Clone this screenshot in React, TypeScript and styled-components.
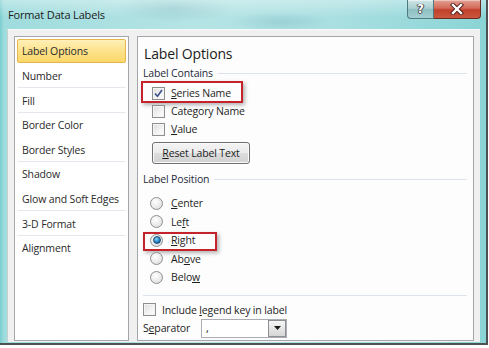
import React from "react";
import styled, { createGlobalStyle } from "styled-components";

const Global = createGlobalStyle`
  html, body { margin: 0; padding: 0; background: #ffffff; }
  body { font-family: "Open Sans", "Noto Sans", Arial, sans-serif; letter-spacing: -0.15px; }
  * { box-sizing: border-box; }
`;

const Window = styled.div`
  width: 488px;
  height: 345px;
  border-right: 2px solid #4d5152;
  border-bottom: 2px solid #4d5152;
  display: flex;
  flex-direction: column;
  background: linear-gradient(90deg, #79cdd0 0px, #9fdcdd 4px, #b6e4e5 40%, #a9dfe1 70%, #8ad4d6 100%);
`;

const TitleBar = styled.div`
  height: 29px;
  flex-shrink: 0;
  display: flex;
  align-items: flex-start;
  padding: 0 5px 0 8px;
  background: linear-gradient(180deg, rgba(255,255,255,0.35), rgba(255,255,255,0) 60%),
    radial-gradient(ellipse 60px 14px at 175px 8px, rgba(80,150,160,0.25), transparent),
    radial-gradient(ellipse 50px 10px at 280px 22px, rgba(80,150,160,0.2), transparent);
`;

const Title = styled.div`
  font-size: 11px;
  line-height: 29px;
  color: #1a1a1a;
  flex: 1;
`;

const Controls = styled.div`
  display: flex;
  height: 19px;
  flex-shrink: 0;
`;

const HelpButton = styled.div`
  width: 27px;
  height: 19px;
  border: 1px solid #4f7a80;
  border-top: none;
  border-radius: 0 0 0 4px;
  background: linear-gradient(180deg, #cfe6e7 0%, #aacfd1 45%, #8dbfc2 55%, #a3cfd1 100%);
  box-shadow: inset 0 1px 0 rgba(255, 255, 255, 0.5);
  display: flex;
  align-items: center;
  justify-content: center;
  color: #ffffff;
  font-family: "DejaVu Sans", sans-serif;
  font-weight: bold;
  font-size: 12px;
  text-shadow: 0 0 1px #303030, 1px 0 0 #505050, -1px 0 0 #505050, 0 1px 0 #505050;
`;

const CloseButton = styled.div`
  width: 47px;
  height: 19px;
  border: 1px solid #6b2a22;
  border-top: none;
  border-left: none;
  border-radius: 0 0 4px 0;
  background: linear-gradient(180deg, #e3a195 0%, #d46a58 45%, #c1402c 55%, #c9583f 100%);
  box-shadow: inset 0 1px 0 rgba(255, 255, 255, 0.4);
  display: flex;
  align-items: center;
  justify-content: center;
`;

const Client = styled.div`
  flex: 1;
  margin: 0 6px 1px 7px;
  background: #f0f0f0;
  border-top: 1px solid #f8fafa;
  border-left: 1px solid #c8d0d0;
  padding: 6px 6px 1px 6px;
  display: flex;
  gap: 8px;
`;

const List = styled.div`
  width: 115px;
  flex-shrink: 0;
  border: 1px solid #a3a6aa;
  background: #ffffff;
  padding: 2px 2px 0 2px;
  display: flex;
  flex-direction: column;
`;

const Item = styled.div<{ $selected?: boolean; $sep?: boolean }>`
  height: 24px;
  padding-left: 4px;
  display: flex;
  align-items: center;
  font-size: 10.5px;
  color: #2a2a2a;
  border-radius: 2px;
  border: 1px solid ${(p) => (p.$selected ? "#e5b74c" : "transparent")};
  background: ${(p) =>
    p.$selected ? "linear-gradient(180deg, #fff0b8 0%, #fde28b 50%, #fcd76a 100%)" : "transparent"};
  ${(p) => (p.$sep ? "border-bottom: 1px solid #e4e8ee; border-radius: 0; height: 25px;" : "")}
`;

const Panel = styled.div`
  flex: 1;
  border: 1px solid #a3a6aa;
  background: #fdfdfd;
  padding: 0 5px 0 5px;
  display: flex;
  flex-direction: column;
`;

const PanelTitle = styled.div`
  margin-top: 7px;
  padding-left: 1px;
  font-size: 14px;
  line-height: 20px;
  color: #1b1b1b;
`;

const SectionHeader = styled.div<{ $top: number }>`
  margin-top: ${(p) => p.$top}px;
  height: 14px;
  display: flex;
  align-items: center;
  gap: 5px;
  font-size: 10.5px;
  color: #1d2a3a;
  &::after {
    content: "";
    flex: 1;
    height: 1px;
    margin-right: 1px;
    background: #dde3ea;
  }
`;

const Rule = styled.div`
  margin-top: 8px;
  height: 1px;
  margin-right: 1px;
  background: #dde3ea;
`;

const Row = styled.div<{ $indent?: number; $h?: number; $top?: number; $gap?: number }>`
  position: relative;
  height: ${(p) => p.$h ?? 18}px;
  margin-top: ${(p) => p.$top ?? 0}px;
  padding-left: ${(p) => p.$indent ?? 0}px;
  display: flex;
  align-items: center;
  gap: ${(p) => p.$gap ?? 6}px;
  font-size: 10.5px;
  color: #1e1e1e;
`;

const Box = styled.span`
  width: 13px;
  height: 13px;
  border: 1px solid #8e8f8f;
  background: linear-gradient(135deg, #dcdcdc 0%, #f4f4f4 60%, #ffffff 100%);
  box-shadow: inset 0 0 0 1px #f4f4f4;
  display: flex;
  align-items: center;
  justify-content: center;
  flex-shrink: 0;
`;

const Radio = styled.span<{ $checked?: boolean }>`
  width: 13px;
  height: 13px;
  border-radius: 50%;
  border: 1px solid #8e8f8f;
  background: radial-gradient(circle at 40% 35%, #ffffff 0%, #e8e8e8 60%, #d4d4d4 100%);
  display: flex;
  align-items: center;
  justify-content: center;
  flex-shrink: 0;
  &::after {
    content: "";
    display: ${(p) => (p.$checked ? "block" : "none")};
    width: 6px;
    height: 6px;
    border-radius: 50%;
    background: radial-gradient(circle at 40% 35%, #8fd3f7 0%, #1f7fc0 60%, #0e4f86 100%);
    border: 0.5px solid #1a4f7a;
  }
`;

const U = styled.span`
  text-decoration: underline;
  text-underline-offset: 1px;
`;

const Highlight = styled.div<{ $l: number; $t: number; $w: number; $h: number }>`
  position: absolute;
  left: ${(p) => p.$l}px;
  top: ${(p) => p.$t}px;
  width: ${(p) => p.$w}px;
  height: ${(p) => p.$h}px;
  border: 2px solid #c4232b;
  box-shadow: 2px 2px 4px rgba(0, 0, 0, 0.3);
  pointer-events: none;
`;

const Button = styled.div`
  margin-top: 4px;
  margin-left: 9px;
  width: 98px;
  height: 22px;
  border: 1px solid #707070;
  border-radius: 3px;
  background: linear-gradient(180deg, #f4f4f4 0%, #ebebeb 48%, #dcdcdc 52%, #d2d2d2 100%);
  box-shadow: inset 0 0 0 1px #fafafa;
  display: flex;
  align-items: center;
  justify-content: center;
  font-size: 10.5px;
  color: #1e1e1e;
`;

const SepLabel = styled.span`
  width: 58px;
  flex-shrink: 0;
`;

const Combo = styled.div`
  width: 86px;
  height: 19px;
  border: 1px solid #abadb3;
  background: #ffffff;
  display: flex;
  align-items: stretch;
`;

const ComboText = styled.div`
  flex: 1;
  padding-left: 4px;
  font-size: 11px;
  line-height: 15px;
`;

const ComboButton = styled.div`
  width: 18px;
  border: 1px solid #8c8f94;
  background: linear-gradient(180deg, #f6f6f6 0%, #e6e6e6 50%, #d6d6d6 100%);
  display: flex;
  align-items: center;
  justify-content: center;
`;

const Check = () => (
  <svg width="9" height="9" viewBox="0 0 9 9">
    <path d="M1 4.5 L3.5 7.2 L8 1" fill="none" stroke="#3c4f8a" strokeWidth="1.6" />
  </svg>
);

const Arrow = () => (
  <svg width="7" height="4" viewBox="0 0 7 4">
    <path d="M0 0 H7 L3.5 4 Z" fill="#1a1a1a" />
  </svg>
);

const CloseX = () => (
  <svg width="14" height="12" viewBox="0 0 14 12">
    <path d="M3 2 L11 10 M11 2 L3 10" stroke="#4a1a14" strokeWidth="4.2" strokeLinecap="square" />
    <path d="M3 2 L11 10 M11 2 L3 10" stroke="#ffffff" strokeWidth="2.4" strokeLinecap="square" />
  </svg>
);

const categories: { label: string; selected?: boolean; sep?: boolean }[] = [
  { label: "Label Options", selected: true },
  { label: "Number", sep: true },
  { label: "Fill", sep: true },
  { label: "Border Color" },
  { label: "Border Styles", sep: true },
  { label: "Shadow" },
  { label: "Glow and Soft Edges", sep: true },
  { label: "3-D Format", sep: true },
  { label: "Alignment" },
];

export default function App() {
  return (
    <>
      <Global />
      <Window>
        <TitleBar>
          <Title>Format Data Labels</Title>
          <Controls>
            <HelpButton>?</HelpButton>
            <CloseButton>
              <CloseX />
            </CloseButton>
          </Controls>
        </TitleBar>
        <Client>
          <List>
            {categories.map((c) => (
              <Item key={c.label} $selected={c.selected} $sep={c.sep}>
                {c.label}
              </Item>
            ))}
          </List>
          <Panel>
            <PanelTitle>Label Options</PanelTitle>
            <SectionHeader $top={2}>Label Contains</SectionHeader>
            <Row $indent={9} $top={4}>
              <Box>
                <Check />
              </Box>
              <span>
                <U>S</U>eries Name
              </span>
              <Highlight $l={-2} $t={-3} $w={102} $h={22} />
            </Row>
            <Row $indent={9}>
              <Box />
              <span>
                Cate<U>g</U>ory Name
              </span>
            </Row>
            <Row $indent={9}>
              <Box />
              <span>
                <U>V</U>alue
              </span>
            </Row>
            <Button>
              <span>
                <U>R</U>eset Label Text
              </span>
            </Button>
            <SectionHeader $top={8}>Label Position</SectionHeader>
            <Row $indent={7} $top={8} $h={18.5} $gap={8}>
              <Radio />
              <span>
                <U>C</U>enter
              </span>
            </Row>
            <Row $indent={7} $h={18.5} $gap={8}>
              <Radio />
              <span>
                Le<U>f</U>t
              </span>
            </Row>
            <Row $indent={7} $h={18.5} $gap={8}>
              <Radio $checked />
              <span>
                <U>R</U>ight
              </span>
              <Highlight $l={0} $t={1} $w={74} $h={19} />
            </Row>
            <Row $indent={7} $h={18.5} $gap={8}>
              <Radio />
              <span>
                Ab<U>o</U>ve
              </span>
            </Row>
            <Row $indent={7} $h={18.5} $gap={8}>
              <Radio />
              <span>
                Belo<U>w</U>
              </span>
            </Row>
            <Rule />
            <Row $top={6} $h={16}>
              <Box />
              <span>
                Include <U>l</U>egend key in label
              </span>
            </Row>
            <Row $top={1} $h={19} $gap={0}>
              <SepLabel>
                S<U>e</U>parator
              </SepLabel>
              <Combo>
                <ComboText>,</ComboText>
                <ComboButton>
                  <Arrow />
                </ComboButton>
              </Combo>
            </Row>
          </Panel>
        </Client>
      </Window>
    </>
  );
}
